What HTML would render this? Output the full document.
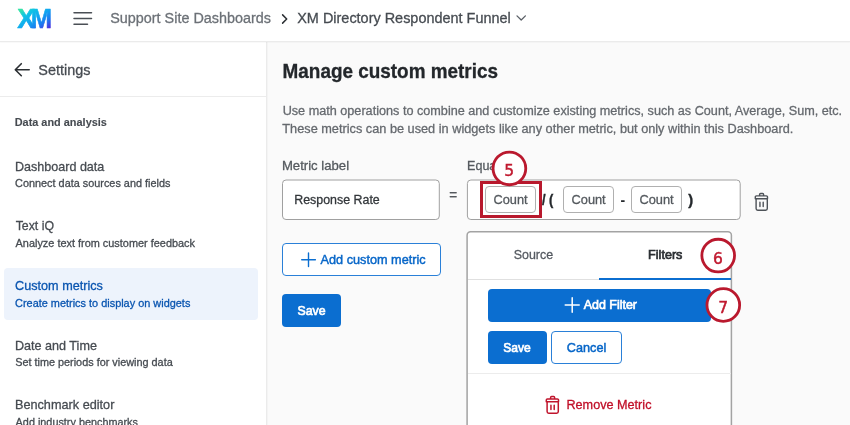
<!DOCTYPE html>
<html lang="en">
<head>
<meta charset="utf-8">
<title>Manage custom metrics</title>
<style>
*{box-sizing:border-box;margin:0;padding:0}
html,body{width:850px;height:425px;overflow:hidden;background:#fafafa;font-family:"Liberation Sans",sans-serif;color:#32363a}
.abs{position:absolute}
.t{position:absolute;left:0;top:0;white-space:nowrap;line-height:1;transform-origin:0 0}
#tx{position:absolute;left:0;top:0;width:850px;height:425px;will-change:transform}

#hdr{position:absolute;left:0;top:0;width:850px;height:42px;background:#fff;border-bottom:1px solid #ebebeb;box-shadow:0 0 1.5px rgba(0,0,0,.10)}
#side{position:absolute;left:0;top:42px;width:267px;height:383px;background:#fff;border-right:1px solid #ebebeb;box-shadow:0 0 1.5px rgba(0,0,0,.10)}
.chip{position:absolute;height:27px;top:186px;width:51px;border:1px solid #b0b0b0;border-radius:4px;background:#fff}
.num{position:absolute;left:0;top:0;white-space:nowrap;line-height:1;color:#c0192f;font-family:"DejaVu Sans","Liberation Sans",sans-serif;font-size:15.5px;transform-origin:0 0;will-change:transform;-webkit-text-stroke:0.45px #c0192f}
.btn{position:absolute;border-radius:4px}
.btn.p{background:#0b6ed0}
.btn.o{background:#fff;border:1px solid #2a80d8}
</style>
</head>
<body>
<div id="side"></div>
<div id="hdr"></div>

<!-- header icons -->
<svg class="abs" style="left:14px;top:6px;will-change:transform" width="42" height="26" viewBox="0 0 42 26">
  <defs><linearGradient id="xg" gradientUnits="userSpaceOnUse" x1="4" y1="3" x2="23" y2="31.6">
    <stop offset="0.06" stop-color="#35e3a6"/><stop offset="0.26" stop-color="#10c4e4"/><stop offset="0.5" stop-color="#10a8f0"/><stop offset="0.73" stop-color="#1a7cf0"/><stop offset="1" stop-color="#5226de"/>
  </linearGradient></defs>
  <g fill="url(#xg)" stroke="url(#xg)" stroke-width="0.55" stroke-linejoin="round" font-family="Liberation Sans, sans-serif" font-weight="bold" font-size="27">
  <text x="3.3" y="21.6">X</text>
  <text x="16.8" y="21.6" textLength="21.3" lengthAdjust="spacingAndGlyphs">M</text>
  </g>
</svg>
<svg class="abs" style="left:73px;top:11px" width="20" height="16" viewBox="0 0 20 16">
  <path d="M1 1.8h17.5M1 7.5h17.5M1 13.2h13.5" stroke="#4a4f55" stroke-width="1.5" fill="none" stroke-linecap="round"/>
</svg>
<svg class="abs" style="left:280px;top:13px" width="9" height="12" viewBox="0 0 9 12"><path d="M2.6 1.9l4.1 4.1-4.1 4.1" stroke="#2b2f33" stroke-width="1.5" fill="none" stroke-linecap="round" stroke-linejoin="round"/></svg>
<svg class="abs" style="left:515px;top:14px" width="12" height="8" viewBox="0 0 12 8"><path d="M2 1.9l4.2 4.1 4.2-4.1" stroke="#5a5f66" stroke-width="1.3" fill="none" stroke-linecap="round" stroke-linejoin="round"/></svg>

<!-- sidebar -->
<svg class="abs" style="left:13px;top:62px" width="18" height="16" viewBox="0 0 18 16"><path d="M8.3 1.7L2.3 7.7l6 6M2.4 7.7h13.8" stroke="#2b2f33" stroke-width="1.6" fill="none" stroke-linecap="round" stroke-linejoin="round"/></svg>
<div class="abs" style="left:0;top:96px;width:266px;height:1px;background:#ececec"></div>
<div class="abs" style="left:4px;top:268px;width:254px;height:52px;border-radius:4px;background:#edf3fc"></div>

<!-- form -->
<svg class="abs" style="left:0;top:0" width="850" height="425" viewBox="0 0 850 425">
  <g fill="#fff" stroke="#a0a0a0" stroke-width="1">
    <rect x="282.5" y="180" width="156.8" height="39.5" rx="3.5"/>
    <rect x="467.4" y="180" width="272.8" height="39.5" rx="3.5"/>
  </g>
</svg>
<div class="chip" style="left:485px"></div>
<div class="chip" style="left:563px"></div>
<div class="chip" style="left:631px"></div>

<svg class="abs" style="left:753px;top:192px" width="17" height="20" viewBox="0 0 17 20">
  <path d="M6.6 3.7V2.5a1 1 0 0 1 1-1h2a1 1 0 0 1 1 1v1.2M3.4 3.9h10a1.1 1.1 0 0 1 1.1 1.1v1.8H2.3V5a1.1 1.1 0 0 1 1.1-1.1zM3.1 7v9.6a1.6 1.6 0 0 0 1.6 1.6h8a1.6 1.6 0 0 0 1.6-1.6V7M6.95 10.3v4.3M10.2 10.3v4.3" stroke="#4d5258" stroke-width="1.4" fill="none" stroke-linecap="round" stroke-linejoin="round"/>
</svg>

<div class="btn o" style="left:282px;top:243px;width:159px;height:33px"></div>
<svg class="abs" style="left:300px;top:252px" width="17" height="16" viewBox="0 0 17 16"><path d="M8.5 1v13.6M1.7 7.8h13.7" stroke="#0b6ed0" stroke-width="1.4" fill="none" stroke-linecap="round"/></svg>
<div class="btn p" style="left:282px;top:294px;width:59px;height:33.4px"></div>

<!-- dropdown -->
<svg class="abs" style="left:0;top:0" width="850" height="425" viewBox="0 0 850 425">
  <rect x="467.1" y="231.8" width="264.3" height="210" rx="3.5" fill="#fff" stroke="#a3a3a3" stroke-width="1.5"/>
</svg>
<div class="abs" style="left:468px;top:278.5px;width:263px;height:1px;background:#e0e0e0"></div>
<div class="abs" style="left:599px;top:278px;width:132px;height:2px;background:#0b6ed0"></div>
<div class="btn p" style="left:488px;top:289px;width:223.3px;height:32.6px"></div>
<svg class="abs" style="left:564px;top:297px" width="17" height="16" viewBox="0 0 17 16"><path d="M8.2 0.8v14.4M1.2 8h14" stroke="#fff" stroke-width="1.5" fill="none" stroke-linecap="round"/></svg>
<div class="btn p" style="left:488px;top:331px;width:59px;height:32.6px"></div>
<div class="btn o" style="left:551.2px;top:331px;width:70.7px;height:32.6px"></div>
<div class="abs" style="left:468px;top:373px;width:263px;height:1px;background:#ececec"></div>
<svg class="abs" style="left:543.5px;top:395px" width="17" height="20" viewBox="0 0 17 20">
  <path d="M6.6 3.7V2.5a1 1 0 0 1 1-1h2a1 1 0 0 1 1 1v1.2M3.4 3.9h10a1.1 1.1 0 0 1 1.1 1.1v1.8H2.3V5a1.1 1.1 0 0 1 1.1-1.1zM3.1 7v9.6a1.6 1.6 0 0 0 1.6 1.6h8a1.6 1.6 0 0 0 1.6-1.6V7M6.95 10.3v4.3M10.2 10.3v4.3" stroke="#c0142c" stroke-width="1.5" fill="none" stroke-linecap="round" stroke-linejoin="round"/>
</svg>

<div id="tx">
<div class="t" style="font-size:15.26px;color:#6c7177;-webkit-text-stroke:0.3px #6c7177;transform:translate(110.21px,10.32px) scaleX(0.9436)">Support Site Dashboards</div>
<div class="t" style="font-size:15.26px;color:#464b51;-webkit-text-stroke:0.3px #464b51;transform:translate(297.24px,10.32px) scaleX(0.9469)">XM Directory Respondent Funnel</div>
<div class="t" style="font-size:15.45px;color:#464b51;-webkit-text-stroke:0.3px #464b51;transform:translate(38.35px,61.86px) scaleX(0.9359)">Settings</div>
<div class="t" style="font-size:11.38px;font-weight:bold;color:#464b51;-webkit-text-stroke:0.1px #464b51;transform:translate(14.68px,117.27px) scaleX(0.9593)">Data and analysis</div>
<div class="t" style="font-size:13.41px;color:#464b51;-webkit-text-stroke:0.3px #464b51;transform:translate(14.97px,160.08px) scaleX(0.9366)">Dashboard data</div>
<div class="t" style="font-size:11.38px;color:#464b51;-webkit-text-stroke:0.3px #464b51;transform:translate(15.09px,178.26px) scaleX(0.9555)">Connect data sources and fields</div>
<div class="t" style="font-size:13.41px;color:#464b51;-webkit-text-stroke:0.3px #464b51;transform:translate(15.68px,219.25px) scaleX(0.9189)">Text iQ</div>
<div class="t" style="font-size:11.38px;color:#464b51;-webkit-text-stroke:0.3px #464b51;transform:translate(15.57px,237.87px) scaleX(0.9587)">Analyze text from customer feedback</div>
<div class="t" style="font-size:13.41px;color:#0a55b0;-webkit-text-stroke:0.3px #0a55b0;transform:translate(15.07px,279.30px) scaleX(0.9435)">Custom metrics</div>
<div class="t" style="font-size:11.38px;color:#0a55b0;-webkit-text-stroke:0.3px #0a55b0;transform:translate(15.08px,298.04px) scaleX(0.9592)">Create metrics to display on widgets</div>
<div class="t" style="font-size:13.41px;color:#464b51;-webkit-text-stroke:0.3px #464b51;transform:translate(14.96px,338.91px) scaleX(0.9397)">Date and Time</div>
<div class="t" style="font-size:11.38px;color:#464b51;-webkit-text-stroke:0.3px #464b51;transform:translate(15.15px,357.09px) scaleX(0.9547)">Set time periods for viewing data</div>
<div class="t" style="font-size:13.41px;color:#464b51;-webkit-text-stroke:0.3px #464b51;transform:translate(14.94px,398.04px) scaleX(0.9463)">Benchmark editor</div>
<div class="t" style="font-size:11.38px;color:#464b51;-webkit-text-stroke:0.3px #464b51;transform:translate(15.62px,416.70px) scaleX(0.9530)">Add industry benchmarks</div>
<div class="t" style="font-size:20.17px;font-weight:bold;color:#23272b;-webkit-text-stroke:0.3px #23272b;transform:translate(282.56px,60.86px) scaleX(0.9381)">Manage custom metrics</div>
<div class="t" style="font-size:13.32px;color:#65696e;-webkit-text-stroke:0.3px #65696e;transform:translate(282.64px,103.82px) scaleX(0.9503)">Use math operations to combine and customize existing metrics, such as Count, Average, Sum, etc.</div>
<div class="t" style="font-size:13.32px;color:#65696e;-webkit-text-stroke:0.3px #65696e;transform:translate(282.34px,122.04px) scaleX(0.9564)">These metrics can be used in widgets like any other metric, but only within this Dashboard.</div>
<div class="t" style="font-size:13.32px;color:#54595e;-webkit-text-stroke:0.3px #54595e;transform:translate(281.91px,158.92px) scaleX(0.9868)">Metric label</div>
<div class="t" style="font-size:13.32px;color:#54595e;-webkit-text-stroke:0.3px #54595e;transform:translate(467.10px,159.38px) scaleX(0.9400)">Equation</div>
<div class="t" style="font-size:13.32px;color:#32363a;-webkit-text-stroke:0.3px #32363a;transform:translate(294.25px,193.00px) scaleX(0.9315)">Response Rate</div>
<div class="t" style="font-size:13.88px;color:#54595e;-webkit-text-stroke:0.3px #54595e;transform:translate(449.30px,189.02px) scaleX(0.9800)">=</div>
<div class="t" style="font-size:12.95px;color:#54595e;-webkit-text-stroke:0.3px #54595e;transform:translate(493.47px,193.65px) scaleX(0.9879)">Count</div>
<div class="t" style="font-size:12.95px;color:#54595e;-webkit-text-stroke:0.3px #54595e;transform:translate(571.55px,193.65px) scaleX(0.9883)">Count</div>
<div class="t" style="font-size:12.95px;color:#54595e;-webkit-text-stroke:0.3px #54595e;transform:translate(639.40px,193.65px) scaleX(0.9902)">Count</div>
<div class="t" style="font-size:15.17px;font-weight:bold;color:#24282c;-webkit-text-stroke:0.4px #24282c;transform:translate(541.97px,191.91px) scaleX(0.8482)">/ (</div>
<div class="t" style="font-size:15.17px;font-weight:bold;color:#24282c;transform:translate(620.46px,191.82px) scaleX(0.9266)">-</div>
<div class="t" style="font-size:15.17px;font-weight:bold;color:#24282c;-webkit-text-stroke:0.4px #24282c;transform:translate(688.15px,191.91px) scaleX(0.9661)">)</div>
<div class="t" style="font-size:13.32px;color:#0766c8;-webkit-text-stroke:0.45px #0766c8;transform:translate(320.57px,252.82px) scaleX(0.9530)">Add custom metric</div>
<div class="t" style="font-size:13.32px;color:#ffffff;-webkit-text-stroke:0.7px #ffffff;transform:translate(297.47px,303.82px) scaleX(0.9260)">Save</div>
<div class="t" style="font-size:13.32px;color:#555a61;-webkit-text-stroke:0.3px #555a61;transform:translate(513.67px,247.92px) scaleX(0.9340)">Source</div>
<div class="t" style="font-size:13.32px;color:#2a2e32;-webkit-text-stroke:0.7px #2a2e32;transform:translate(648.05px,247.92px) scaleX(0.9487)">Filters</div>
<div class="t" style="font-size:13.32px;color:#ffffff;-webkit-text-stroke:0.7px #ffffff;transform:translate(583.64px,298.26px) scaleX(0.9360)">Add Filter</div>
<div class="t" style="font-size:13.32px;color:#ffffff;-webkit-text-stroke:0.7px #ffffff;transform:translate(503.26px,340.82px) scaleX(0.9083)">Save</div>
<div class="t" style="font-size:13.32px;color:#0766c8;-webkit-text-stroke:0.5px #0766c8;transform:translate(566.87px,340.82px) scaleX(0.9512)">Cancel</div>
<div class="t" style="font-size:13.32px;color:#c00f28;-webkit-text-stroke:0.3px #c00f28;transform:translate(566.42px,398.38px) scaleX(0.9502)">Remove Metric</div>
</div>

<!-- annotations -->
<div class="abs" style="left:480px;top:181px;width:62px;height:37px;border:3px solid #b8192d"></div>
<svg class="abs" style="left:0;top:0" width="850" height="425" viewBox="0 0 850 425">
  <g fill="#fff" stroke="#ba192e" stroke-width="2.8">
    <circle cx="509.4" cy="168.4" r="16.35"/>
    <circle cx="718.2" cy="255.6" r="16.35"/>
    <circle cx="723.3" cy="305.0" r="16.35"/>
  </g>
</svg>
<div class="num" style="transform:translate(504.3px,164.4px)">5</div>
<div class="num" style="transform:translate(713.0px,251.6px)">6</div>
<div class="num" style="transform:translate(718.3px,301.0px)">7</div>
</body>
</html>
